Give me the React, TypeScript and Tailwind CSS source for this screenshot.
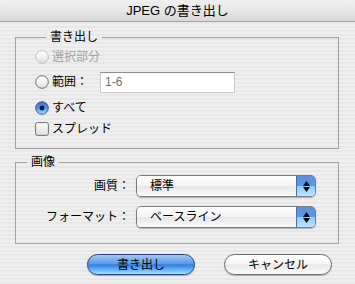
import React from "react";

const font = "font-['Liberation_Sans','Noto_Sans_CJK_JP',sans-serif]";

const Radio: React.FC<{ checked?: boolean; disabled?: boolean }> = ({ checked, disabled }) => (
  <svg width="14" height="14" viewBox="0 0 14 14" className="shrink-0">
    <defs>
      <linearGradient id="rOff" x1="0" y1="0" x2="0" y2="1">
        <stop offset="0" stopColor="#ffffff" />
        <stop offset="0.5" stopColor="#f2f2f2" />
        <stop offset="1" stopColor="#dcdcdc" />
      </linearGradient>
      <linearGradient id="rOn" x1="0" y1="0" x2="0" y2="1">
        <stop offset="0" stopColor="#3f74d0" />
        <stop offset="0.5" stopColor="#4d92ea" />
        <stop offset="1" stopColor="#a9e0ff" />
      </linearGradient>
    </defs>
    <circle
      cx="7"
      cy="7"
      r="6.3"
      fill={checked ? "url(#rOn)" : "url(#rOff)"}
      stroke={checked ? "#2d4f8f" : disabled ? "#bdbdbd" : "#5f5f5f"}
      strokeWidth="0.9"
    />
    {checked && <circle cx="7" cy="7" r="2.4" fill="#0d1a3a" />}
  </svg>
);

const Checkbox: React.FC = () => (
  <svg width="14" height="14" viewBox="0 0 14 14" className="shrink-0">
    <defs>
      <linearGradient id="cb" x1="0" y1="0" x2="0" y2="1">
        <stop offset="0" stopColor="#ffffff" />
        <stop offset="1" stopColor="#dedede" />
      </linearGradient>
    </defs>
    <rect x="0.6" y="0.6" width="12.8" height="12.8" rx="2" fill="url(#cb)" stroke="#5f5f5f" strokeWidth="0.9" />
  </svg>
);

const Popup: React.FC<{ value: string }> = ({ value }) => (
  <div className="flex h-[22px] w-[180px] rounded-[5px] border border-[#7b7b7b] shadow-[0_1px_1px_rgba(0,0,0,0.25)] overflow-hidden">
    <div className="flex flex-1 items-center pl-[13px] text-[12px] bg-[linear-gradient(180deg,#ffffff_0%,#f4f4f4_50%,#e6e6e6_51%,#fafafa_100%)]">
      {value}
    </div>
    <div className="flex w-[19px] flex-col items-center justify-center gap-[1px] border-l border-[#4a6fb0] bg-[linear-gradient(180deg,#5d8fdc_0%,#5a9aec_50%,#8cc8ff_51%,#bfe6ff_100%)]">
      <svg width="7" height="5" viewBox="0 0 7 5"><path d="M3.5 0 L7 5 L0 5 Z" fill="#0b0b0b" /></svg>
      <svg width="7" height="5" viewBox="0 0 7 5"><path d="M0 0 L7 0 L3.5 5 Z" fill="#0b0b0b" /></svg>
    </div>
  </div>
);

export default function App() {
  return (
    <div className={`${font} w-[355px] h-[284px] flex flex-col text-black bg-[repeating-linear-gradient(180deg,#efefef_0px,#efefef_2px,#e8e8e8_2px,#e8e8e8_4px)]`}>
      <div className="h-[22px] shrink-0 flex items-center justify-center rounded-t-[6px] border-b border-[#a3a3a3] bg-[linear-gradient(180deg,#efefef_0%,#e6e6e6_50%,#d8d8d8_100%)] text-[13px]">
        JPEG の書き出し
      </div>

      <fieldset className="mt-[7px] ml-[15px] mr-[16px] border border-[#a2a2a2] pl-[19px] pt-[2px] pb-[9px]">
        <legend className="ml-[11px] px-[4px] text-[12px] leading-[16px]">書き出し</legend>
        <div className="flex h-[20px] items-center gap-[3px] text-[12px] text-[#a3a3a3]">
          <Radio disabled />
          <span>選択部分</span>
        </div>
        <div className="mt-[4px] flex h-[22px] items-center text-[12px]">
          <Radio />
          <span className="ml-[3px] w-[48px]">範囲：</span>
          <div className="flex h-[21px] w-[135px] items-center border border-[#c9c9c9] border-t-[#8d8d8d] bg-white pl-[4px] text-[12px] text-[#6f6f6f]">
            1-6
          </div>
        </div>
        <div className="mt-[5px] flex h-[20px] items-center gap-[3px] text-[12px]">
          <Radio checked />
          <span>すべて</span>
        </div>
        <div className="mt-[1px] flex h-[20px] items-center gap-[3px] text-[12px]">
          <Checkbox />
          <span>スプレッド</span>
        </div>
      </fieldset>

      <fieldset className="mt-[5px] ml-[15px] mr-[16px] border border-[#a2a2a2] pt-[5px] pb-[15px]">
        <legend className="ml-[11px] px-[4px] text-[12px] leading-[16px]">画像</legend>
        <div className="flex items-center">
          <span className="w-[120px] pr-[6px] text-right text-[12px]">画質：</span>
          <Popup value="標準" />
        </div>
        <div className="mt-[9px] flex items-center">
          <span className="w-[120px] pr-[6px] text-right text-[12px]">フォーマット：</span>
          <Popup value="ベースライン" />
        </div>
      </fieldset>

      <div className="mt-[10px] flex pl-[87px] gap-[29px]">
        <button className="h-[21px] w-[108px] rounded-full border border-[#23428a] text-[12px] shadow-[0_1px_1px_rgba(0,0,0,0.3)] bg-[linear-gradient(180deg,#a5c8f2_0%,#5b9be6_45%,#2f7fe0_52%,#6cb8ff_80%,#a9e4ff_100%)]">
          書き出し
        </button>
        <button className="h-[21px] w-[108px] rounded-full border border-[#6a6a6a] text-[12px] shadow-[0_1px_1px_rgba(0,0,0,0.25)] bg-[linear-gradient(180deg,#ffffff_0%,#f6f6f6_45%,#e8e8e8_52%,#f5f5f5_85%,#ffffff_100%)]">
          キャンセル
        </button>
      </div>
    </div>
  );
}
